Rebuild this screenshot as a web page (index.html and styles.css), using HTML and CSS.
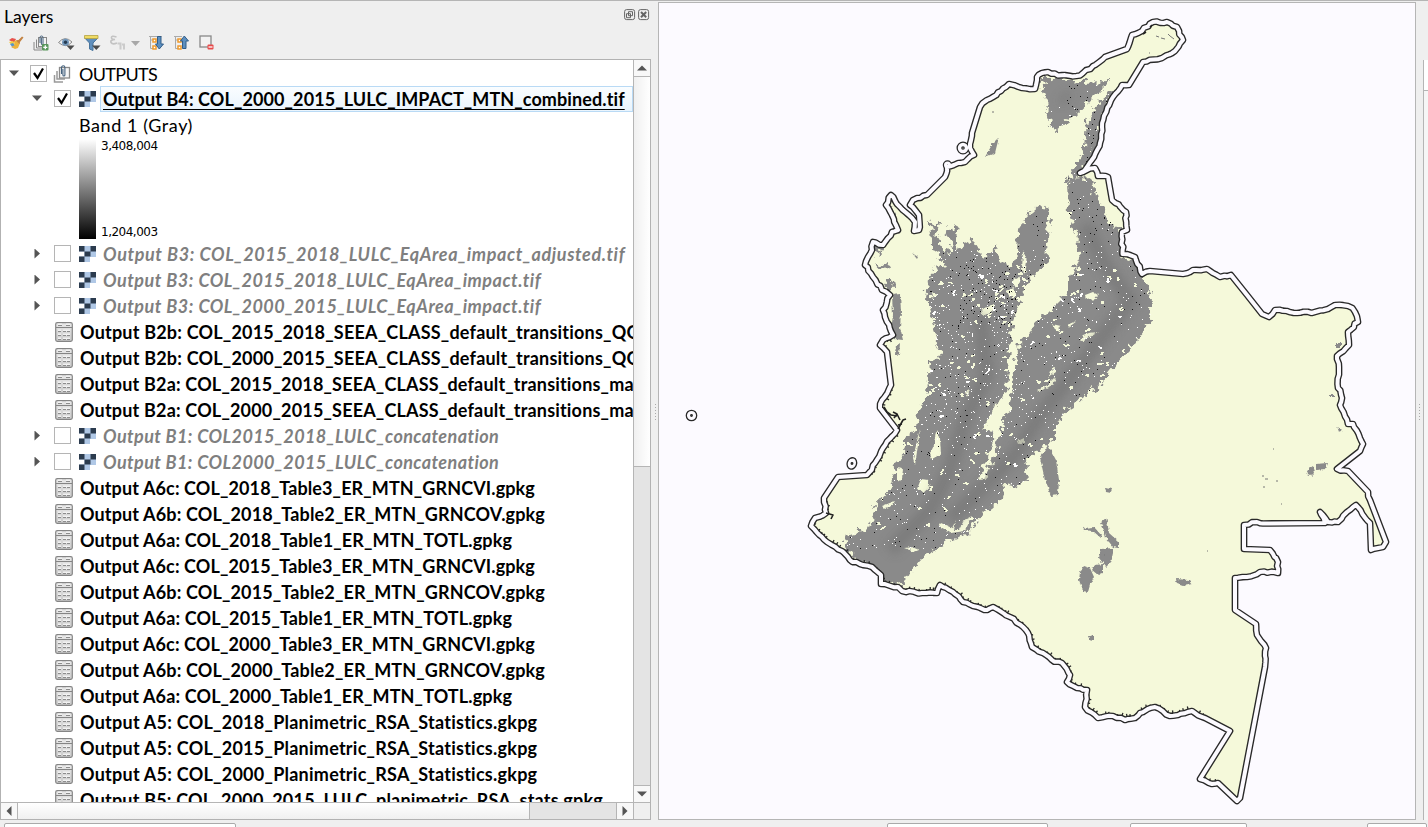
FILE: index.html
```html
<!DOCTYPE html>
<html lang="en">
<head>
<meta charset="utf-8">
<title>Layers</title>
<link rel="stylesheet" href="styles.css">
</head>
<body>
<svg width="0" height="0" class="defs">
  <defs>
    <linearGradient id="metal" x1="0" y1="0" x2="0" y2="1"><stop offset="0" stop-color="#e9e9e9"/><stop offset="1" stop-color="#c9c9c9"/></linearGradient>
    <symbol id="raster" viewBox="0 0 17 16"><path fill="#b0c8e6" d="M0 0h17v11h-6v5H0z"/><path fill="#fff" d="M0 5.500h5.500v5H0z"/><path fill="#2b3b4e" d="M0 0h5.500v5.500H0zM11.500 0H17v5.500h-5.500zM5.500 5.500h6v5h-6zM0 10.500h5.500V16H0z"/></symbol>
    <symbol id="table" viewBox="0 0 18 20"><rect x=".7" y=".7" width="16.600" height="18.600" rx="1.500" fill="url(#metal)" stroke="#858585" stroke-width="1.200"/><path d="M1 5.500h16" stroke="#858585"/><path d="M3 2.500h4M11 2.500h4M3 8.500h3M8 8.500h7M3 12.500h3M8 12.500h7M3 16.500h3M8 16.500h7" stroke="#f2f2f2" stroke-width="2"/><path d="M3 3.500h4M11 3.500h4M3 9.500h3M8 9.500h3M12 9.500h3M3 13.500h3M8 13.500h3M12 13.500h3M3 17.500h3M8 17.500h3M12 17.500h3" stroke="#8d8d8d"/></symbol>
    <symbol id="group" viewBox="0 0 18 18"><path d="M1.500 10v7H10M4 6v8h8" fill="none" stroke="#999" stroke-width="1.500"/><rect x="6.500" y="2.500" width="10" height="10.500" fill="#f6f6f6" stroke="#8a8a8a" stroke-width="1.300"/><path d="M8.500 9V2.500a1.700 1.700 0 0 1 3.400 0V10a1 1 0 0 1-2 0V4" fill="none" stroke="#46637f" stroke-width="1.100"/></symbol>
  </defs>
</svg>
<div class="app">
  <section class="dock">
    <header class="title"><span>Layers</span>
      <svg width="26" height="12" viewBox="0 0 26 12" fill="none" stroke="#656565"><rect x=".6" y=".6" width="10" height="10" rx="2"/><path d="M4.500 2.700h4v4h-4zM2.500 4.700h4v4h-4z"/><rect x="14.600" y=".6" width="10" height="10" rx="2"/><path d="M17 3l5.200 5.200M22.200 3L17 8.200" stroke-width="2"/></svg>
    </header>
    <div class="tools">
      <svg width="16" height="16" viewBox="0 0 16 16"><path d="M1 5l3-2 4 1-2 4z" fill="#e7524c"/><path d="M1 7l4-1 3 4-3 2z" fill="#f2cf45"/><path d="M2 9l3-1 3 4-3 1z" fill="#5793ca"/><path d="M6 6l4-1 2 3-2 5-3 1-4-2 4-2z" fill="#edb23b"/><path d="M8 5.500l2.500-.5L14 1.500l1.500 1L12 7l-.5 2z" fill="#c38343"/></svg>
      <svg width="16" height="16" viewBox="0 0 16 16"><path d="M1 7v8h8M3.500 4.500V13H11" fill="none" stroke="#888"/><rect x="5.500" y="2.500" width="8" height="9" fill="#f3f3f3" stroke="#888"/><path d="M7 8V2.500a1.500 1.500 0 0 1 3 0V9a.8.800 0 0 1-1.600 0V3" fill="none" stroke="#46637f"/><rect x="9" y="9" width="6.500" height="6.500" rx="1" fill="#58975b"/><path d="M12.300 10.300v4M10.300 12.300h4" stroke="#fff" stroke-width="1.300"/></svg>
      <svg width="17" height="16" viewBox="0 0 17 16"><path d="M.5 7.500Q7 0 14 7Q8 14 .5 7.500" fill="#f0f0f0" stroke="#8b8b8b"/><circle cx="7.500" cy="7.300" r="3.500" fill="#7196ba"/><circle cx="7.500" cy="7.300" r="1.700" fill="#253a50"/><path d="M8.500 10.500h8l-4 4.500z" fill="#4b4b4b"/></svg>
      <svg width="17" height="16" viewBox="0 0 17 16"><path d="M.8 3L5.500 8v6l3.500 1.500V8l4.800-5z" fill="#608fbd" stroke="#47749d"/><path d="M.5.500h13.500v3H.5z" fill="#efdb65" stroke="#b5a344" stroke-width=".8"/><path d="M8 10.500h8.500L12.300 15z" fill="#4b4b4b"/></svg>
      <svg width="30" height="16" viewBox="0 0 30 16"><path d="M6.500 2Q1 0 1.500 3 1.700 4.500 5 4.500 0 5 1 7.500 2.500 10 7 8" fill="none" stroke="#c3c3c3" stroke-width="1.600"/><path d="M7.500 8.500h3v6M14 14.500v-5h-2" fill="none" stroke="#ccc" stroke-width="2"/><path d="M21 6h9l-4.500 5z" fill="#a8a8a8"/></svg>
      <svg width="16" height="16" viewBox="0 0 16 16"><path d="M1.500 1v12.500H6M1.500 5H6M0 1.500h13" stroke="#aaa" fill="none"/><path d="M4 4h3v3H4zM4 11h3v3H4z" fill="#fff" stroke="#f09b2d" stroke-width="1.500"/><path d="M8.500 1.500h3.500V9h2.500l-4.200 5L6.500 9h2z" fill="#5d8fbf" stroke="#335e89"/></svg>
      <svg width="16" height="16" viewBox="0 0 16 16"><path d="M1.500 1v12.500H6M1.500 5H6M0 1.500h8" stroke="#aaa" fill="none"/><path d="M4 4h3v3H4zM4 11h3v3H4z" fill="#fff" stroke="#f09b2d" stroke-width="1.500"/><path d="M8.500 13.500h3.500V6h2.500l-4.200-5L6.500 6h2z" fill="#5d8fbf" stroke="#335e89"/></svg>
      <svg width="16" height="16" viewBox="0 0 16 16"><rect x="1" y="1" width="11" height="11" fill="#f2f2f2" stroke="#888" stroke-width="1.300"/><rect x="8.500" y="9.500" width="6" height="5" rx="1" fill="#e84b4b"/><path d="M9.500 12h4" stroke="#fff" stroke-width="1.300"/></svg>
    </div>
    <div class="view">
      <div class="tree" id="tree"></div>
      <div class="vbar"><i class="btn up"></i><i class="vthumb"></i><i class="vtrack"></i><i class="btn down"></i></div>
      <div class="hbar"><i class="btn left"></i><i class="hthumb"></i><i class="htrack"></i><i class="btn right"></i></div>
      <div class="corner"></div>
    </div>
  </section>
  <div class="split"></div>
  <main class="canvas">
    <svg width="756" height="816" viewBox="659 3 756 816">
      <defs>
        <filter id="rough" filterUnits="userSpaceOnUse" x="800" y="10" width="600" height="810" color-interpolation-filters="sRGB"><feTurbulence type="fractalNoise" baseFrequency=".16" numOctaves="3" seed="5" result="n"/><feDisplacementMap in="SourceGraphic" in2="n" scale="13" xChannelSelector="R" yChannelSelector="G"/></filter>
        <filter id="grain" filterUnits="userSpaceOnUse" x="800" y="10" width="600" height="810" color-interpolation-filters="sRGB"><feTurbulence type="fractalNoise" baseFrequency=".3" numOctaves="2" seed="3" result="n"/><feDisplacementMap in="SourceGraphic" in2="n" scale="4" xChannelSelector="R" yChannelSelector="G"/></filter>
        <path id="land" d="M980 107L987 100 993 97 1001 91 1009 84 1022 88 1035 89 1037 77 1042 73 1048 72 1058 75.500 1080 75.500 1093 66 1105 57 1127 49 1132 35 1142 31 1153 22 1167 22 1177 27 1183 40 1175 51 1162 58 1143 62 1129 85 1122 85 1113 97 1104 116 1102 127 1100 143 1094 157 1087 167 1080 173 1095 168 1098 176 1108 177 1112 200 1126 212 1127 230 1122 232 1122.500 254 1135 257 1142 274 1150 271 1183 274 1193 270 1207 269 1220 277 1231 275 1247 295 1262 314 1269 317 1275 310 1297 313 1315 312 1328 309 1335 305 1348 306 1355 312 1358 322 1348 332 1349 345 1337 356 1339 367 1338 388 1342 398 1340 405 1348 424 1353 424 1360 438 1363 444 1360 451 1337 469 1348 471 1368 492 1370 500 1386 542 1383 547 1371 550 1370 523 1356 505 1347 512 1338 522 1328 522 1320 512 1325 523 1263 523.500 1257 522 1244 525 1244 549 1270 550 1278 562 1278 573 1260 572 1247 577 1235 578 1235 610 1256 624 1257 635 1266 648 1265 667 1240 798 1237 801 1218 783 1212 784 1200 779 1230 731 1205 718 1192 711 1178 715 1170 716 1155 707 1140 713 1135 718 1125 720 1113 716 1098 718 1085 707 1087 690 1077 688 1067 682 1070 675 1062 663 1052 660 1043 653 1032 647 1028 633 1023 627 1010 617 993 607 987 610 973 606 963 602 953 592 940 585 937 593 922 593 902 591 898 587 881 584 881 575 872 567 860 564 850 560 842 551 827 542 811 526 815 518 826 513 824 498 838 477 867 475 875 463 883 448 897 430 880 408 882 400 891 385 887 352 880 345 883 340 893 335 885 317 883 310 890 295 882 290 873 277 865 265 872 250 873 242 883 245 892 232 898 230 892 215 886 205 891 195 900 207 912 218 915 222 914 231 919 230 919 215 910 205 913 200 927 195 945 177 947 167 965 162 974 155 970 148 972 133Z"/>
        <path id="massif" d="M929 219L934 228 939 220 937 240 946 257 951 245 945 230 960 225 957 238 956 250 972 240 981 255 985 258 994 247 1000 262 1013 266 1017 252 1018 230 1028 215 1040 205 1048 212 1047 238 1048 262 1035 273 1027 285 1023 293 1012 323 1010 350 1006 390 997 407 983 430 994 432 987 460 979 479 984 479 995 455 1000 430 1010 405 1014 370 1018 345 1030 332 1037 322 1045 315 1065 295 1070 278 1080 260 1077 235 1069 215 1068 180 1092 178 1095 197 1105 213 1113 225 1122 235 1122 255 1135 260 1143 278 1152 297 1150 322 1135 343 1118 362 1100 385 1080 400 1065 412 1055 430 1055 438 1045 445 1026 460 1028 480 1015 487 1005 485 1000 500 985 513 965 535 950 540 935 550 925 555 900 585 885 583 880 573 870 566 855 558 843 548 848 535 865 530 875 515 873 508 890 490 895 468 905 450 905 438 915 430 918 410 928 395 930 360 940 355 935 335 933 320 926 300 928 280 933 270 945 265 933 247Z"/>
        <path id="north" d="M1041 77L1052 77 1080 82 1110 81 1095 96 1075 115 1055 132 1050 125 1045 95ZM1118 87L1112 96 1103 115 1100 140 1091 160 1078 177 1067 181 1078 162 1085 148 1087 120 1100 100Z"/>
        <clipPath id="hills"><use href="#massif"/><use href="#north"/></clipPath>
        <clipPath id="inside"><use href="#land"/></clipPath>
        <filter id="soft"><feGaussianBlur stdDeviation="5"/></filter>
      </defs>
      <use href="#land" fill="#f5f9da"/>
      <g clip-path="url(#inside)">
        <g filter="url(#rough)" fill="#8a8a8a">
          <use href="#massif"/><use href="#north"/>
          <path d="M874 245h9l-4 13zM875 263l6 3 9-4-4 8-7-1zM883 282l9-4 1 11-6 1z"/>
        </g>
        <path filter="url(#grain)" fill="#8a8a8a" d="M1048 445l8 15 3 20-1 15-7 1-6-16-5-22zM890 204l6 12 4 18-4-3-6-14zM892 295l8-1 1 18-1 16 3 12-9-1-2-16 1-8zM896 346l4-3-1 12-4-1zM985 157l8-14 6-6-4 16zM912 253l6 4-1 2zM1083 528l11-1 8 9-1 2-8-7-9-1zM1100 523l6-5 2 8 1 7 10 9v6l-6-1-7-9-2-8zM1101 549l12-1v5l-2 9-5 5-7-9zM1095 565l8-1v9l-5 2-6-5zM1080 572l4-6 6 2 4 9-4 8-2 7-5-1-4-11zM1088 636l5-2v7l-4-1zM1105 487l7 1-1 5-5-1zM1176 579l13 1 3 4-9 2-6-2zM1307 470l6-4 2 7-3 3-4-2zM1316 464l11-1-2 6-9 1zM1337 426l5 5-3 1zM1336 343h5v4h-5zM1330 394h4v3h-4z"/>
        <g filter="url(#grain)" fill="#f5f9da"><path d="M936 431l4 7 1 16-9 5-2-5 4-9zM897 467l6 1-1 11-5 3zM921 479l7 1 2 7-6 5-7-3zM882 506l13-5-4 6-6 2zM972 516l-7 15-14 2-12-7 2-3 11 5 4-8-2 10h5l5-10zM904 548l8-1 7 3-5 2zM918 437l2-8-2 16-3 20-2-7zM1027 461l5-2-2 5zM1038 390l8-4 8-8 2 2-7 7-9 4zM1083 335l5-2 10-1-6 4-5 2-6 4zM1068 325l9-4-8 6zM1085 295l8-3 5 3-5 6-3-3-4 1zM983 308l5-1 6-3v5l-4 4-6 3-3-4zM1006 291l8-3-2 4-3 6zM1013 280l8-4-1 6-4 6-3-3zM1023 250l4 11-2 14-3-5zM932 292l5 3-4 3zM1050 371l5-3v4l-7 5zM1018 441l6-3v4l-5 2zM965 392l5-2-3 7zM1052 324l9 2-4 2 6 4-7-1zM995 405l13-12-3 22-9 5-14 10 8-13z"/></g>
        <g clip-path="url(#hills)"><g filter="url(#soft)" fill="none" stroke="#707070" stroke-width="14" opacity=".5"><path d="M980 315L987 375 965 420 950 470 930 510 890 550M1085 225L1105 265 1130 300 1085 360 1040 415 1015 455 950 520M1063 96l4 4"/></g></g>
        <g id="specks" clip-path="url(#hills)" shape-rendering="crispEdges"></g>
        <path d="M1156 36l3 1M1161 38l4 1M1168 34l2 2 4 3M1149 53h1M1262 476h2M1265 479h3M1277 480v2M1263 487h2M1281 504h1M1273 449h1M1207 551h1M1100 562h1M1104 555h1M1099 572h1M992 112h2" stroke="#777" fill="none"/>
      </g>
      <g fill="none" stroke-linejoin="round">
        <path id="inlets" stroke="#292929" stroke-width="1.300" clip-path="url(#inside)"/>
        <path class="border" stroke="#292929" stroke-width="6.700"/><circle cx="963" cy="148" r="3.500" stroke="#292929" stroke-width="6"/><circle cx="947.500" cy="165" r="2" stroke="#292929" stroke-width="5.500"/>
        <path class="border" stroke="#fcfaff" stroke-width="4"/><circle cx="963" cy="148" r="3.500" stroke="#fcfaff" stroke-width="3.400"/><circle cx="947.500" cy="165" r="2" stroke="#fcfaff" stroke-width="3"/>
        <path d="M884 407l3 5 4 3 6 1M893 412l4 2-3 4M898 429l5-9 3-1M897 414l3 6M898 425l4-1M826 513l7 2-2 4M1143 34l3-2M1150 27l2-2" stroke="#222" stroke-width="1.600"/>
      </g>
      <g fill="#fcfaff" stroke="#292929" stroke-width="1.300"><circle cx="691.500" cy="415.500" r="5.200"/><circle cx="691.500" cy="415.500" r=".8"/><ellipse cx="852" cy="463.500" rx="4.700" ry="5.800" transform="rotate(18 852 463)"/><circle cx="852" cy="463.500" r=".8"/></g>
    </svg>
  </main>
  <aside class="edge"><i></i></aside>
  <footer class="status"><i class="f1"></i><i class="f2"></i><i class="f3"></i><i class="f4"></i></footer>
</div>
<script src="app.js"></script>
</body>
</html>
```

FILE: styles.css
```css
* { box-sizing: border-box; }
body { margin: 0; background: #efefef; color: #000; font-family: Lato, "Open Sans", sans-serif; overflow: hidden; }
.defs { display: block; height: 0; }
.app { width: 1428px; height: 827px; display: grid; grid-template-columns: 651px 7px 758px 12px; grid-template-rows: 820px 7px; box-shadow: inset 0 1px #b5b5b5; }
.dock { display: flex; flex-direction: column; }
.title { height: 32px; padding: 0 1px 0 4px; display: flex; align-items: center; justify-content: space-between; font-size: 17.5px; }
.title svg { margin-bottom: 3px; }
.tools { height: 27px; padding: 3px 8px 0; display: flex; gap: 9px; align-items: flex-start; }
.view { height: 761px; border: 1px solid #b2b2b2; background: #fff; display: grid; grid-template-columns: minmax(0, 1fr) 17px; grid-template-rows: 742px 17px; }
.tree { overflow: hidden; }
.row { height: 26px; display: flex; align-items: center; white-space: nowrap; font-size: 18px; line-height: 24px; padding-bottom: 1px; }
.row .label { flex: none; font-weight: 700; }
.row svg { flex: none; }
.root { padding: 1px 0 0 7px; }
.root .label { font-weight: 400; margin-left: 8px; }
.layer { padding-left: 32px; }
.layer .label { margin-left: 7px; }
.off .label { color: #7f7f7f; font-style: italic; }
.table { padding-left: 55px; }
.table .label { margin-left: 7px; }
.arrow { flex: none; width: 10px; height: 10px; margin-right: 12px; background: #555; clip-path: polygon(0 20%, 100% 20%, 50% 75%); }
.layer .arrow { margin-right: 12px; }
.root .arrow { margin-left: 1px; margin-right: 11px; }
.arrow.closed { clip-path: polygon(25% 0, 80% 50%, 25% 100%); }
.box { flex: none; width: 17px; height: 17px; border: 1px solid #b5b5b5; background: #fff; margin-right: 8px; }
.root .box { margin-right: 6px; }
.box svg { display: block; }
.sel { width: 540px; height: 26px; margin-left: 4px; padding-left: 2px; border: 1px solid #b9daf5; background: linear-gradient(#fafdff, #e9f4fd); display: flex; align-items: center; }
.sel .label { margin-left: 0; text-decoration: underline; text-decoration-thickness: 1px; text-underline-offset: 3px; text-decoration-skip-ink: none; }
.band { padding-left: 79px; }
.band .label { font-weight: 400; }
.layer, .table, .band { padding-top: 0; }
.layer, .band { margin-left: -1px; }
.table { margin-left: -1px; }
.layer .box { margin-left: 1px; }
.layer .arrow { margin-right: 11px; }
.legend { height: 103px; display: flex; gap: 5px; padding: 1px 0 2px 78px; font: 12px "DejaVu Sans", sans-serif; }
.ramp { width: 17px; background: linear-gradient(#fff, #000); }
.range { display: flex; flex-direction: column; justify-content: space-between; letter-spacing: -.5px; }
.vbar { display: flex; flex-direction: column; border-left: 1px solid #b5b5b5; }
.hbar { display: flex; border-top: 1px solid #b5b5b5; }
.corner { border: solid #b5b5b5; border-width: 1px 0 0 1px; background: #efefef; }
.btn { flex: none; width: 16px; height: 16px; background: #f8f8f8; display: flex; align-items: center; justify-content: center; }
.btn::after { content: ""; width: 10px; height: 10px; background: #555; }
.up::after { clip-path: polygon(0 75%, 100% 75%, 50% 25%); }
.down::after { clip-path: polygon(0 25%, 100% 25%, 50% 75%); }
.left::after { clip-path: polygon(75% 0, 75% 100%, 25% 50%); }
.right::after { clip-path: polygon(25% 0, 25% 100%, 75% 50%); }
.vthumb { height: 391px; border: solid #b5b5b5; border-width: 1px 0; background: linear-gradient(90deg, #f0f0f0, #fff); }
.vtrack { flex: 1; background: #e4e4e4; border-bottom: 1px solid #b5b5b5; }
.hthumb { width: 513px; border: solid #b5b5b5; border-width: 0 1px; background: linear-gradient(#fff, #f0f0f0); }
.htrack { flex: 1; background: #e4e4e4; border-right: 1px solid #b5b5b5; }
.split, .edge { display: flex; }
.split::after, .edge::after { content: ""; width: 1px; height: 17px; margin: 404px 0 0 4px; background: repeating-linear-gradient(#aaa 0 1px, transparent 1px 3px); }
.canvas { border: 1px solid #b5b5b5; margin-top: 2px; background: #fcfaff; height: 818px; }
.canvas svg { display: block; }
.edge { justify-content: flex-end; }
.edge::after { order: -1; margin: 404px 3px 0 0; }
.edge i { width: 5px; border-left: 1px solid #b5b5b5; margin-top: 60px; background: linear-gradient(#fff 0 30px, #b5b5b5 30px 31px, #f6f6f6 31px); }
.status { grid-column: 1 / -1; display: flex; padding: 3px 0 0 4px; }
.status i { height: 8px; border: 1px solid #aaa; border-radius: 2px; background: #fff; }
.f1 { width: 232px; }
.f2 { width: 161px; margin-left: 651px; }
.f3 { width: 117px; margin-left: 82px; }
.f4 { width: 60px; margin-left: 120px; }
```

FILE: app.js
```js
const rows = [
  ["root", "OUTPUTS", 78],
  ["sel", "Output B4: COL_2000_2015_LULC_IMPACT_MTN_combined.tif", 522],
  ["band", "Band 1 (Gray)", 114],
  ["legend"],
  ["off", "Output B3: COL_2015_2018_LULC_EqArea_impact_adjusted.tif", 522],
  ["off", "Output B3: COL_2015_2018_LULC_EqArea_impact.tif", 438],
  ["off", "Output B3: COL_2000_2015_LULC_EqArea_impact.tif", 438],
  ["table", "Output B2b: COL_2015_2018_SEEA_CLASS_default_transitions_QG", 560],
  ["table", "Output B2b: COL_2000_2015_SEEA_CLASS_default_transitions_QG", 560],
  ["table", "Output B2a: COL_2015_2018_SEEA_CLASS_default_transitions_ma", 554],
  ["table", "Output B2a: COL_2000_2015_SEEA_CLASS_default_transitions_ma", 554],
  ["off", "Output B1: COL2015_2018_LULC_concatenation", 396],
  ["off", "Output B1: COL2000_2015_LULC_concatenation", 396]
];
for (const year of [2018, 2015, 2000]) {
  rows.push(["table", `Output A6c: COL_${year}_Table3_ER_MTN_GRNCVI.gpkg`, 455]);
  rows.push(["table", `Output A6b: COL_${year}_Table2_ER_MTN_GRNCOV.gpkg`, 465]);
  rows.push(["table", `Output A6a: COL_${year}_Table1_ER_MTN_TOTL.gpkg`, 432]);
}
for (const year of [2018, 2015, 2000]) rows.push(["table", `Output A5: COL_${year}_Planimetric_RSA_Statistics.gkpg`, 458]);
rows.push(["table", "Output B5: COL_2000_2015_LULC_planimetric_RSA_stats.gpkg", 523]);

const icon = (id, w, h) => `<svg width="${w}" height="${h}"><use href="#${id}"/></svg>`;
const check = '<svg width="15" height="15" viewBox="0 0 15 15"><path d="M3 7l3.500 5L12 2.500" fill="none" stroke="#000" stroke-width="2.200"/></svg>';
const box = on => `<span class="box">${on ? check : ""}</span>`;
document.getElementById("tree").innerHTML = rows.map(([kind, text, w]) => {
  const label = `<span class="label" data-w="${w}">${text}</span>`;
  if (kind === "root") return `<div class="row root"><i class="arrow"></i>${box(true)}${icon("group", 18, 18)}${label}</div>`;
  if (kind === "sel") return `<div class="row layer"><i class="arrow"></i>${box(true)}${icon("raster", 17, 16)}<div class="sel">${label}</div></div>`;
  if (kind === "off") return `<div class="row layer off"><i class="arrow closed"></i>${box(false)}${icon("raster", 17, 16)}${label}</div>`;
  if (kind === "band") return `<div class="row band">${label}</div>`;
  if (kind === "legend") return '<div class="legend"><div class="ramp"></div><div class="range"><span>3,408,004</span><span>1,204,003</span></div></div>';
  return `<div class="row table">${icon("table", 18, 20)}${label}</div>`;
}).join("");

for (const el of document.querySelectorAll("[data-w]")) {
  const gap = (el.dataset.w - el.getBoundingClientRect().width) / el.textContent.length;
  el.style.letterSpacing = gap.toFixed(3) + "px";
}

let seed = 71;
const rnd = () => (seed = (seed * 16807) % 2147483647) / 2147483647;

// Meandering border line: short segments wander a little, surveyed straight ones stay straight.
const nums = document.getElementById("land").getAttribute("d").match(/[\d.]+/g).map(Number);
const pts = [];
for (let i = 0; i < nums.length; i += 2) pts.push([nums[i], nums[i + 1]]);
let line = "", inlets = "";
pts.forEach(([x, y], i) => {
  const [nx, ny] = pts[(i + 1) % pts.length];
  const len = Math.hypot(nx - x, ny - y);
  line += `${line ? "L" : "M"}${x} ${y}`;
  const straight = len > 23 || (x > 1225 && x < 1265 && y > 270 && y < 316);
  const steps = straight ? 1 : Math.max(1, Math.round(len / 4));
  for (let k = 1; k < steps; k++) {
    const px = x + (nx - x) * k / steps + (rnd() - .5) * 2, py = y + (ny - y) * k / steps + (rnd() - .5) * 2;
    line += `L${px.toFixed(1)} ${py.toFixed(1)}`;
    if (y > 335 && x < 1235) {
      const ux = -(ny - y) / len, uy = (nx - x) / len, r = 3 + rnd() * 2.5;
      inlets += `M${px} ${py}l${ux * r} ${uy * r}`;
    }
  }
});
for (const el of document.querySelectorAll(".border")) el.setAttribute("d", line + "Z");
document.getElementById("inlets").setAttribute("d", inlets);

// Single-cell raster values scattered over the mountain classes.
const scatter = (n, color, x, y, w, h) => {
  let d = "";
  for (let i = 0; i < n; i++) d += `M${x + Math.floor(rnd() * w)} ${y + Math.floor(rnd() * h)}h${rnd() > .8 ? 2 : 1}v1h-1z`;
  return `<path fill="${color}" d="${d}"/>`;
};
// Small irregular clusters of unclassified cells.
const clusters = (n, color, x, y, w, h) => {
  let d = "";
  for (let i = 0; i < n; i++) {
    let cx = x + Math.floor(rnd() * w), cy = y + Math.floor(rnd() * h);
    for (let k = 0; k < 7; k++) {
      d += `M${cx} ${cy}h2v1h-2z`;
      cx += Math.floor(rnd() * 3) - 1;
      cy += Math.floor(rnd() * 3) - 1;
    }
  }
  return `<path fill="${color}" d="${d}"/>`;
};
document.getElementById("specks").innerHTML =
  scatter(1100, "#fff", 840, 250, 320, 300) + scatter(230, "#fff", 930, 260, 100, 180) +
  clusters(150, "#f5f9da", 860, 260, 290, 270) + clusters(22, "#f5f9da", 970, 270, 60, 50) +
  clusters(40, "#fff", 930, 270, 200, 200) +
  scatter(620, "#161616", 840, 200, 320, 350) + scatter(110, "#111", 960, 265, 70, 60) +
  scatter(140, "#111", 1066, 85, 55, 150) + scatter(110, "#fff", 1040, 85, 90, 170);
```
